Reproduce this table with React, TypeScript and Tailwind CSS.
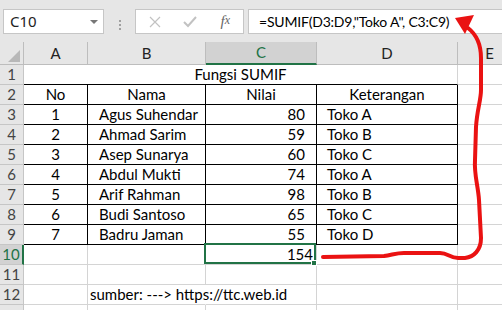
import React from "react";

const rows: [number, string, number, string][] = [
  [1, "Agus Suhendar", 80, "Toko A"],
  [2, "Ahmad Sarim", 59, "Toko B"],
  [3, "Asep Sunarya", 60, "Toko C"],
  [4, "Abdul Mukti", 74, "Toko A"],
  [5, "Arif Rahman", 98, "Toko B"],
  [6, "Budi Santoso", 65, "Toko C"],
  [7, "Badru Jaman", 55, "Toko D"],
];

const cell =
  "relative flex items-end pb-[1px] border-r border-b whitespace-nowrap text-[15px] leading-[18px] text-black";
const grid = "border-[#d4d4d4]";
const edge = "border-black";

const RowHead = ({ n, active }: { n?: number; active?: boolean }) => (
  <div
    className={
      active
        ? "flex items-center justify-center bg-[#d2d2d2] border-b border-[#c6c6c6] border-r-2 border-r-[#217346] text-[#217346] text-[15px]"
        : "flex items-center justify-center bg-[#e6e6e6] border-b border-r border-[#c6c6c6] text-[#444] text-[15px]"
    }
  >
    {n}
  </div>
);

const ColHead = ({ label, active }: { label: string; active?: boolean }) => (
  <div
    className={
      active
        ? "flex items-center justify-center bg-[#d2d2d2] border-r border-[#bdbdbd] border-b-2 border-b-[#217346] text-[#217346] text-[15px]"
        : "flex items-center justify-center bg-[#e6e6e6] border-r border-b border-[#bdbdbd] text-[#222] text-[15px]"
    }
  >
    {label}
  </div>
);

const FormulaBar = () => (
  <div className="h-[42px] bg-[#e6e6e6] flex pt-[9px] pl-[3px] font-['Noto_Sans',sans-serif]">
    <div className="w-[101px] h-[25px] bg-white border border-[#c6c6c6] flex items-center justify-between pl-[6px] pr-[5px] text-[15px] text-[#222]">
      <span>C10</span>
      <span className="w-0 h-0 border-l-[4px] border-r-[4px] border-t-[4px] border-l-transparent border-r-transparent border-t-[#777]" />
    </div>
    <div className="w-[31px] flex flex-col items-center justify-center gap-[2px] pb-[1px]">
      <span className="w-[2px] h-[2px] bg-[#a0a0a0]" />
      <span className="w-[2px] h-[2px] bg-[#a0a0a0]" />
      <span className="w-[2px] h-[2px] bg-[#a0a0a0]" />
    </div>
    <div className="w-[109px] h-[25px] bg-white border border-[#c6c6c6] flex items-center">
      <span className="w-[36px] flex justify-center ml-[1px]">
        <svg width="12" height="12" viewBox="0 0 12 12">
          <path d="M1 1 L11 11 M11 1 L1 11" stroke="#c2c2c2" strokeWidth="1.2" fill="none" />
        </svg>
      </span>
      <span className="w-[36px] flex justify-center">
        <svg width="14" height="12" viewBox="0 0 14 12">
          <path d="M1 6 L5 10 L13 1" stroke="#c2c2c2" strokeWidth="2" fill="none" />
        </svg>
      </span>
      <span className="w-[36px] flex justify-center font-['Liberation_Serif',serif] italic text-[#666] text-[15px] leading-none">
        f<span className="text-[12px]">x</span>
      </span>
    </div>
    <div className="ml-[4px] flex-1 h-[25px] bg-white border border-r-0 border-[#c6c6c6] flex items-center pl-[10px] font-['Lato',sans-serif] text-[14px] tracking-[-0.2px] text-black whitespace-nowrap">
      =SUMIF(D3:D9,"Toko A", C3:C9)
    </div>
  </div>
);

const Sheet = () => (
  <div className="grid grid-cols-[24px_64px_118px_111px_141px_64px] grid-rows-[23px_repeat(13,20px)] font-['Lato',sans-serif]">
    {/* column headers */}
    <div className="relative bg-[#e6e6e6] border-r border-b border-[#bdbdbd]">
      <svg className="absolute right-[3px] bottom-[2px]" width="12" height="12" viewBox="0 0 12 12">
        <polygon points="12,0 12,12 0,12" fill="#b8b8b8" />
      </svg>
    </div>
    <ColHead label="A" />
    <ColHead label="B" />
    <ColHead label="C" active />
    <ColHead label="D" />
    <ColHead label="E" />

    {/* row 1 */}
    <RowHead n={1} />
    <div className={`${cell} col-span-4 justify-center border-b-black border-r-[#d4d4d4]`}>Fungsi SUMIF</div>
    <div className={`${cell} ${grid}`} />

    {/* row 2 */}
    <RowHead n={2} />
    <div className={`${cell} ${edge} justify-center`}>No</div>
    <div className={`${cell} ${edge} justify-center`}>Nama</div>
    <div className={`${cell} ${edge} justify-center`}>Nilai</div>
    <div className={`${cell} ${edge} justify-center`}>Keterangan</div>
    <div className={`${cell} ${grid}`} />

    {rows.map(([no, nama, nilai, ket], i) => (
      <React.Fragment key={no}>
        <RowHead n={i + 3} />
        <div className={`${cell} ${edge} justify-center`}>{no}</div>
        <div className={`${cell} ${edge} pl-[11px]`}>{nama}</div>
        <div className={`${cell} ${edge} justify-end pr-[11px]`}>{nilai}</div>
        <div className={`${cell} ${edge} pl-[10px]`}>{ket}</div>
        <div className={`${cell} ${grid}`} />
      </React.Fragment>
    ))}

    {/* row 10 */}
    <RowHead n={10} active />
    <div className={`${cell} ${grid}`} />
    <div className={`${cell} ${grid}`} />
    <div className={`${cell} ${grid} justify-end pr-[3px]`}>
      154
      <span className="absolute -left-[2px] -top-[2px] right-0 bottom-0 border-2 border-[#217346] z-10" />
      <span className="absolute -right-[1px] -bottom-[2px] w-[6px] h-[6px] bg-[#217346] border border-white z-10" />
    </div>
    <div className={`${cell} ${grid}`} />
    <div className={`${cell} ${grid}`} />

    {/* row 11 */}
    <RowHead n={11} />
    <div className={`${cell} ${grid}`} />
    <div className={`${cell} ${grid}`} />
    <div className={`${cell} ${grid}`} />
    <div className={`${cell} ${grid}`} />
    <div className={`${cell} ${grid}`} />

    {/* row 12 */}
    <RowHead n={12} />
    <div className={`${cell} ${grid}`} />
    <div className={`${cell} ${grid} border-r-transparent pl-[2px]`}>sumber: ---&gt; https://ttc.web.id</div>
    <div className={`${cell} ${grid}`} />
    <div className={`${cell} ${grid}`} />
    <div className={`${cell} ${grid}`} />

    {/* row 13, only its top edge is in view */}
    <RowHead />
    <div className={`${cell} ${grid}`} />
    <div className={`${cell} ${grid}`} />
    <div className={`${cell} ${grid}`} />
    <div className={`${cell} ${grid}`} />
    <div className={`${cell} ${grid}`} />
  </div>
);

const Arrow = () => (
  <svg className="absolute left-0 top-0 pointer-events-none z-20" width="502" height="310" viewBox="0 0 502 310">
    <path
      d="M323 257 L384 256 C392 255 396 253 404 253 L440 253 C448 253 450 258 458 258 L465 258 C474 257 481 250 481 238 L479 200 C478 185 474 175 475 160 L476 127 C477 110 481 100 481 90 L481 58 C481 44 477 35 468 28"
      stroke="#ea1212"
      strokeWidth="4"
      fill="none"
      strokeLinecap="round"
      strokeLinejoin="round"
    />
    <polygon points="455,18 474,15 465,34" fill="#ea1212" />
  </svg>
);

export default function App() {
  return (
    <div className="relative w-[502px] h-[310px] overflow-hidden bg-white">
      <FormulaBar />
      <Sheet />
      <Arrow />
    </div>
  );
}
